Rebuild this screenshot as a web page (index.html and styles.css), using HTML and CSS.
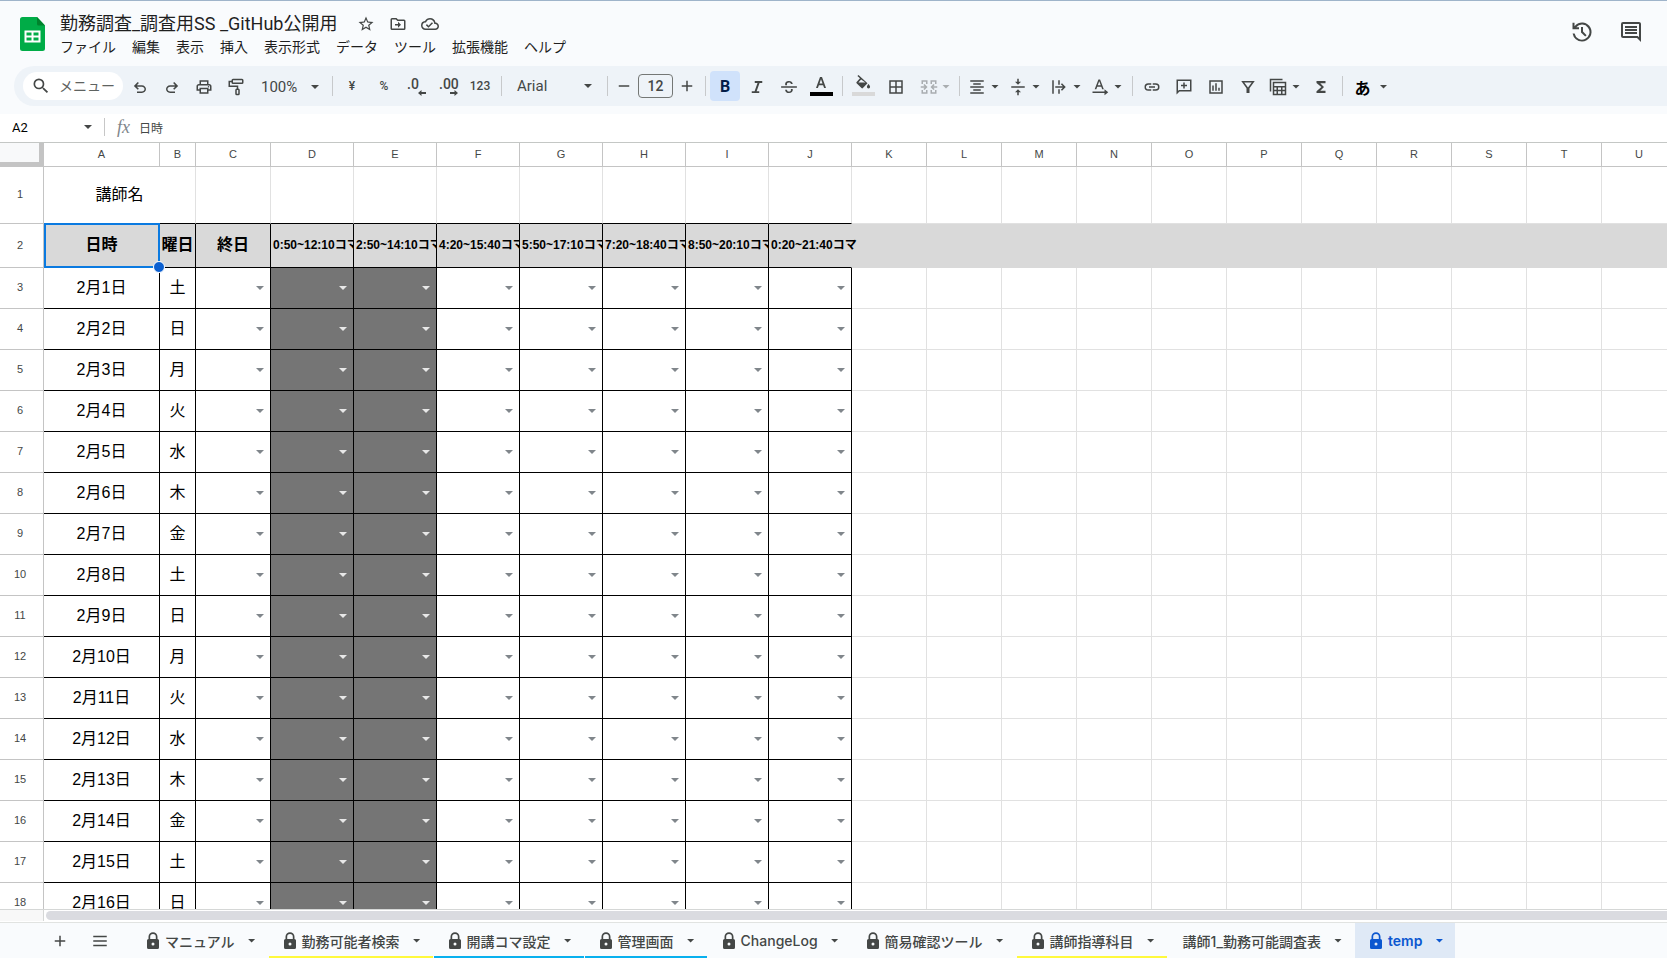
FILE: index.html
```html
<!DOCTYPE html>
<html lang="ja">
<head>
<meta charset="utf-8">
<meta name="viewport" content="width=device-width, initial-scale=1">
<title>勤務調査_調査用SS _GitHub公開用</title>
<link rel="stylesheet" href="styles.css">
</head>
<body>
<header class="app-header">
  <a class="logo" href="#" aria-label="スプレッドシート ホーム">
    <svg width="25" height="34" viewBox="0 0 25 34"><path fill="#00ac47" d="M2.500 0H17l8 8.500V31.500a2.500 2.500 0 0 1-2.500 2.500h-20A2.500 2.500 0 0 1 0 31.500v-29A2.500 2.500 0 0 1 2.500 0z"/><path fill="#00832d" d="M17 0l8 8.500h-6.500A1.500 1.500 0 0 1 17 7z"/><path fill="#fff" fill-rule="evenodd" d="M4.500 13.500h16v12h-16zM6.500 15.500v3h5v-3zm7 0v3h5v-3zm-7 5v3h5v-3zm7 0v3h5v-3z"/></svg>
  </a>
  <div class="heading">
    <div class="title-row">
      <h1 class="doc-title">勤務調査_調査用SS _GitHub公開用</h1>
      <div class="title-actions">
        <button class="plain" aria-label="スターを付ける"><svg class="ic" viewBox="0 0 24 24"><path d="M22 9.240l-7.190-.620L12 2 9.190 8.630 2 9.240l5.460 4.730L5.820 21 12 17.270 18.180 21l-1.630-7.030L22 9.240zM12 15.400l-3.760 2.270 1-4.280-3.320-2.880 4.380-.380L12 6.100l1.710 4.040 4.380.380-3.320 2.880 1 4.280L12 15.400z"/></svg></button>
        <button class="plain" aria-label="移動"><svg class="ic" viewBox="0 0 24 24"><path d="M20 6h-8l-2-2H4a2 2 0 0 0-2 2v12a2 2 0 0 0 2 2h16a2 2 0 0 0 2-2V8a2 2 0 0 0-2-2zm0 12H4V6h5.170l2 2H20v10zm-8-1l4-4-4-4v3H8v2h4z"/></svg></button>
        <button class="plain" aria-label="保存状況"><svg class="ic" viewBox="0 0 24 24"><path d="M19.350 10.040A7.490 7.490 0 0 0 12 4C9.110 4 6.600 5.640 5.350 8.040A5.994 5.994 0 0 0 0 14c0 3.310 2.690 6 6 6h13c2.760 0 5-2.240 5-5 0-2.640-2.050-4.780-4.650-4.960zM19 18H6c-2.210 0-4-1.790-4-4 0-2.050 1.530-3.760 3.560-3.970l1.070-.110.500-.950A5.469 5.469 0 0 1 12 6c2.620 0 4.880 1.860 5.390 4.430l.300 1.500 1.530.110A2.980 2.980 0 0 1 22 15c0 1.650-1.350 3-3 3zm-9-3.820l-2.090-2.090L6.500 13.500 10 17l6.010-6.010-1.410-1.410z"/></svg></button>
      </div>
    </div>
    <nav class="menus" aria-label="メニュー">
      <button class="plain">ファイル</button><button class="plain">編集</button><button class="plain">表示</button><button class="plain">挿入</button><button class="plain">表示形式</button><button class="plain">データ</button><button class="plain">ツール</button><button class="plain">拡張機能</button><button class="plain">ヘルプ</button>
    </nav>
  </div>
  <div class="header-actions">
    <button class="plain" aria-label="変更履歴"><svg class="ic-lg" viewBox="0 0 24 24"><path d="M12 21.500A9.500 9.500 0 0 1 2.600 13.500h2a7.500 7.500 0 1 0 1.700-6.300H9v2H2.500V2.700h2v3.500A9.500 9.500 0 1 1 12 21.500zM11 7h2v4.600l3.600 3.600-1.400 1.400L11 12.400z"/></svg></button>
    <button class="plain" aria-label="コメント"><svg class="ic-lg" viewBox="0 0 24 24"><path d="M22 4c0-1.100-.9-2-2-2H4a2 2 0 0 0-2 2v12c0 1.100.9 2 2 2h14l4 4V4zm-2 13.170L18.830 16H4V4h16v13.170zM6 12h12v2H6zm0-3h12v2H6zm0-3h12v2H6z"/></svg></button>
  </div>
</header>

<div class="toolbar" role="toolbar" aria-label="ツールバー">
  <label class="search">
    <svg class="ic-search" viewBox="0 0 24 24"><path d="M15.500 14h-.790l-.280-.270A6.471 6.471 0 0 0 16 9.500 6.500 6.500 0 1 0 9.500 16c1.610 0 3.090-.590 4.230-1.570l.270.280v.790l5 4.990L20.490 19l-4.990-5zm-6 0C7.010 14 5 11.990 5 9.500S7.010 5 9.500 5 14 7.010 14 9.500 11.990 14 9.500 14z"/></svg>
    <input type="text" placeholder="メニュー" aria-label="メニューを検索">
  </label>
  <button class="tool" aria-label="元に戻す"><svg class="ic" viewBox="0 0 24 24"><path d="M8 20v-2h6.500c2 0 3.500-1.300 3.500-3.200S16.500 11.500 14.500 11.500H7.800l2.700 2.700L9 15.700l-5.200-5.200L9 5.300l1.500 1.500-2.700 2.700h6.700c3.100 0 5.500 2.300 5.500 5.300S17.600 20 14.500 20z"/></svg></button>
  <button class="tool" aria-label="やり直し"><svg class="ic" viewBox="0 0 24 24"><path d="M16 20v-2H9.500C7.500 18 6 16.700 6 14.800s1.500-3.300 3.500-3.300h6.700l-2.700 2.700 1.500 1.500 5.200-5.200L15 5.300l-1.500 1.500 2.700 2.700H9.500C6.400 9.500 4 11.800 4 14.800S6.400 20 9.500 20z"/></svg></button>
  <button class="tool" aria-label="印刷"><svg class="ic" viewBox="0 0 24 24"><path d="M19 8h-1V3H6v5H5c-1.660 0-3 1.340-3 3v6h4v4h12v-4h4v-6c0-1.660-1.340-3-3-3zM8 5h8v3H8V5zm8 12v2H8v-4h8v2zm2-2v-2H6v2H4v-4c0-.550.450-1 1-1h14c.550 0 1 .450 1 1v4h-2z"/><circle cx="18" cy="11.500" r="1"/></svg></button>
  <button class="tool" aria-label="書式を貼り付け"><svg class="ic outline" viewBox="0 0 24 24"><rect x="7" y="2" width="14" height="5" rx="1"/><path d="M7 4.500H3V11h11v4"/><rect x="12" y="15" width="4" height="7" rx="1"/></svg></button>
  <button class="tool zoom"><span>100%</span><i class="caret"></i></button>
  <span class="sep"></span>
  <button class="tool small" aria-label="通貨の表示形式">¥</button>
  <button class="tool small" aria-label="パーセント">%</button>
  <button class="tool decimals" aria-label="小数点以下の桁数を減らす"><span>.0</span><svg width="8" height="6" viewBox="0 0 8 6"><path d="M3.500 0v2H8v2H3.500v2L0 3z"/></svg></button>
  <button class="tool decimals" aria-label="小数点以下の桁数を増やす"><span>.00</span><svg width="8" height="6" viewBox="0 0 8 6"><path d="M4.500 0v2H0v2h4.500v2L8 3z"/></svg></button>
  <button class="tool small" aria-label="表示形式の詳細">123</button>
  <span class="sep"></span>
  <button class="tool font"><span>Arial</span><i class="caret"></i></button>
  <span class="sep"></span>
  <button class="tool step" aria-label="縮小"><svg class="ic" viewBox="0 0 24 24"><path d="M5 11h14v2H5z"/></svg></button>
  <input class="size" type="text" value="12" aria-label="フォントサイズ">
  <button class="tool step" aria-label="拡大"><svg class="ic" viewBox="0 0 24 24"><path d="M5 11h6V5h2v6h6v2h-6v6h-2v-6H5z"/></svg></button>
  <span class="sep"></span>
  <button class="tool on" aria-label="太字" aria-pressed="true"><b>B</b></button>
  <button class="tool" aria-label="斜体"><svg class="ic" viewBox="0 0 24 24"><path d="M9 4v2.500h3.700L8.800 17.500H5V20h10v-2.500h-3.500l3.900-11H19V4z"/></svg></button>
  <button class="tool" aria-label="取り消し線"><svg class="ic" viewBox="0 0 24 24"><path d="M1.500 11h21v2h-21zM7 9.500C6.300 5.800 8.800 4 12 4c2.700 0 4.700 1.300 5 4h-2.500c-.2-1.300-1-2-2.500-2-1.900 0-3.200 1-2.600 3.500zM17 14.500c.5 3.500-1.800 5.500-5 5.500-2.900 0-5-1.500-5.200-4.500h2.500c.2 1.700 1.100 2.500 2.700 2.500 2 0 3-1.200 2.500-3.500z"/></svg></button>
  <button class="tool ink" aria-label="テキストの色"><svg width="18" height="14" viewBox="0 0 18 14"><path fill-rule="evenodd" d="M8 1h2l4 11h-1.900l-1-2.800H6.900L5.900 12H4zM7.500 7.600h3L9 3.200z"/></svg><i class="bar"></i></button>
  <span class="sep"></span>
  <button class="tool ink fill" aria-label="塗りつぶしの色"><svg width="18" height="16" viewBox="0 0 18 16"><path fill-rule="evenodd" d="M4.500 0l9 8.300-4.600 4.800c-.4.400-1 .4-1.400 0L2.600 8.300c-.4-.4-.4-1 0-1.400L6 3.300 3.400 1zM7.100 4.500L4.400 7.500h7zM14.500 9s1.600 1.700 1.600 2.800a1.600 1.600 0 0 1-3.200 0C12.900 10.700 14.500 9 14.500 9z"/></svg><i class="bar pale"></i></button>
  <button class="tool" aria-label="枠線"><svg class="ic" viewBox="0 0 24 24"><path d="M3 3v18h18V3zm8 16H5v-6h6zm0-8H5V5h6zm8 8h-6v-6h6zm0-8h-6V5h6z"/></svg></button>
  <button class="tool merge" aria-label="セルを結合" disabled><svg class="ic" viewBox="0 0 24 24"><path d="M2 3h8v5H8V5H4v3H2zm12 0h8v5h-2V5h-4v3h-2zM2 16h2v3h4v-3h2v5H2zm12 0h2v3h4v-3h2v5h-8zM1 11h5.200L4.500 9.300 6 8l4 4-4 4-1.500-1.300L6.200 13H1zm22 0h-5.200l1.700-1.700L18 8l-4 4 4 4 1.500-1.300-1.700-1.700H23z"/></svg><i class="caret"></i></button>
  <span class="sep"></span>
  <button class="tool pair" aria-label="水平方向の配置"><svg class="ic" viewBox="0 0 24 24"><path d="M3 3h18v2H3zm4 4h10v2H7zm-4 4h18v2H3zm4 4h10v2H7zm-4 4h18v2H3z"/></svg><i class="caret"></i></button>
  <button class="tool pair" aria-label="垂直方向の配置"><svg class="ic" viewBox="0 0 24 24"><path d="M3 11h18v2H3zM11 1h2v4h3l-4 4-4-4h3zm1 14l4 4h-3v4h-2v-4H8z"/></svg><i class="caret"></i></button>
  <button class="tool pair" aria-label="テキストを折り返す"><svg class="ic" viewBox="0 0 24 24"><path d="M3 3h2v18H3zM11 3h2v6h-2zm0 12h2v6h-2zM7 11h10.200l-2.700-2.600L16 7l5 5-5 5-1.500-1.400 2.700-2.600H7z"/></svg><i class="caret"></i></button>
  <button class="tool pair" aria-label="テキストの回転"><svg class="ic" viewBox="0 0 24 24"><path fill-rule="evenodd" d="M9.900 2h2.200l5 13h-2.200l-1.200-3.300H8.300L7.100 15H4.900zM9 9.800h4l-2-5.600zM2 18h16v-3l5 4-5 4v-3H2z"/></svg><i class="caret"></i></button>
  <span class="sep"></span>
  <button class="tool" aria-label="リンクを挿入"><svg class="ic" viewBox="0 0 24 24"><path d="M3.900 12c0-1.710 1.390-3.100 3.100-3.100h4V7H7a5 5 0 0 0 0 10h4v-1.900H7c-1.710 0-3.100-1.390-3.100-3.100zM8 13h8v-2H8v2zm9-6h-4v1.900h4a3.100 3.100 0 0 1 0 6.200h-4V17h4a5 5 0 0 0 0-10z"/></svg></button>
  <button class="tool" aria-label="コメントを挿入"><svg class="ic" viewBox="0 0 24 24"><path d="M2 2h20v16H6l-4 4zm2 2v13.200L5.200 16H20V4zm7 2h2v3h3v2h-3v3h-2v-3H8V9h3z"/></svg></button>
  <button class="tool" aria-label="グラフを挿入"><svg class="ic" viewBox="0 0 24 24"><path d="M3 3h18v18H3zm2 2v14h14V5zm2 5h2v7H7zm4-3h2v10h-2zm4 6h2v4h-2z"/></svg></button>
  <button class="tool" aria-label="フィルタを作成"><svg class="ic" viewBox="0 0 24 24"><path d="M3 4h18l-7 9.500V20h-4v-6.500zm4 2l5 6.800L17 6z"/></svg></button>
  <button class="tool pair" aria-label="テーブル"><svg class="ic" viewBox="0 0 24 24"><path fill-rule="evenodd" d="M1 1h17v2H3v15H1zM5 5h18v18H5zm2 2v3.500h14V7zm0 5.500v3h3v-3zm5 0v3h4v-3zm6 0v3h3v-3zm-11 5V21h3v-3.500zm5 0V21h4v-3.500zm6 0V21h3v-3.500z"/></svg><i class="caret"></i></button>
  <button class="tool" aria-label="関数"><svg class="ic" viewBox="0 0 24 24"><path d="M18 4H6v2.500l6.500 5.500L6 17.500V20h12v-3h-7l5-5-5-5h7z"/></svg></button>
  <span class="sep"></span>
  <button class="tool ime" aria-label="入力ツール"><b>あ</b><i class="caret"></i></button>
</div>

<div class="formula">
  <div class="namebox"><input type="text" value="A2" aria-label="名前ボックス"><i class="caret"></i></div>
  <span class="divider"></span>
  <label class="fx" for="fx-input">fx</label>
  <input class="fx-input" id="fx-input" type="text" value="日時">
</div>

<main class="sheet">
  <table class="grid">
    <colgroup id="cols"></colgroup>
    <thead><tr id="letters"></tr></thead>
    <tbody id="rows"></tbody>
  </table>
</main>

<div class="scroll"><div class="scroll-corner"></div><div class="scroll-track"><div class="thumb"></div></div></div>

<footer class="tabs">
  <button class="plain foot" aria-label="シートを追加"><svg class="ic" viewBox="0 0 24 24"><path d="M5 11h6V5h2v6h6v2h-6v6h-2v-6H5z"/></svg></button>
  <button class="plain foot" aria-label="すべてのシート"><svg class="ic" viewBox="0 0 24 24"><path d="M3 5h18v2H3zm0 6h18v2H3zm0 6h18v2H3z"/></svg></button>
  <nav class="tab-list" id="tabs" aria-label="シート"></nav>
</footer>
<script src="script.js"></script>
</body>
</html>
```

FILE: styles.css
```css
* { box-sizing: border-box; }

body {
  margin: 0;
  height: 100vh;
  display: flex;
  flex-direction: column;
  overflow: hidden;
  background: #f9fbfd;
  border-top: 1px solid #9fb4ca;
  color: #1f1f1f;
  font-family: Roboto, "Noto Sans CJK JP", sans-serif;
  font-size: 14px;
}

button, input, select { font: inherit; color: inherit; margin: 0; }
svg { display: block; fill: #444746; flex: none; }
.ic { width: 18px; height: 18px; }
.ic-lg { width: 24px; height: 24px; }
.outline { fill: none; stroke: #444746; stroke-width: 2; }
.plain { padding: 0; border: 0; background: none; white-space: nowrap; }

.caret {
  flex: none;
  width: 8px;
  height: 4px;
  background: #444746;
  clip-path: polygon(0 0, 100% 0, 50% 100%);
}

/* header */
.app-header { display: flex; flex: none; height: 65px; padding: 0 24px 0 20px; }
.logo { padding-top: 16px; margin-right: 15px; }
.heading { flex: 1; padding-top: 11px; }
.title-row { display: flex; align-items: center; height: 24px; gap: 20px; }
.doc-title { margin: 0; font-size: 18px; line-height: 24px; font-weight: 400; white-space: nowrap; }
.title-actions { display: flex; gap: 14px; }
.menus { display: flex; gap: 16px; line-height: 22px; }
.header-actions { display: flex; align-items: center; gap: 25px; height: 61px; }

/* toolbar */
.toolbar {
  display: flex;
  flex: none;
  align-items: center;
  gap: 2px;
  height: 40px;
  margin-left: 14px;
  padding-left: 9px;
  border-radius: 20px 0 0 20px;
  background: #eef3f8;
  color: #444746;
}
.search {
  display: flex;
  align-items: center;
  flex: none;
  width: 100px;
  height: 28px;
  padding-left: 8px;
  gap: 8px;
  border-radius: 14px;
  background: #fff;
}
.ic-search { width: 20px; height: 20px; }
.search input { width: 60px; padding: 0; border: 0; background: none; outline: 0; }
.search input::placeholder { color: #5f6361; opacity: 1; }
.tool {
  display: flex;
  flex: none;
  align-items: center;
  justify-content: center;
  width: 30px;
  height: 30px;
  padding: 1px 0 0;
  border: 0;
  border-radius: 4px;
  background: none;
  font-weight: 500;
}
.sep { flex: none; width: 1px; height: 20px; margin: 0 2px 0 4px; background: #c7c9cb; }
.zoom { width: 73px; padding: 2px 7px 0 8px; justify-content: space-between; font-weight: 400; font-size: 15px; }
.small { padding: 0; font-size: 12px; }
.decimals { flex-direction: column; align-items: flex-start; padding-left: 6px; font-size: 14px; line-height: 12px; }
.decimals svg { align-self: flex-end; margin-right: 5px; }
.font { width: 95px; padding: 0 9px 0 11px; justify-content: space-between; font-weight: 400; font-size: 15px; }
.step { width: 24px; padding: 0; }
.size {
  flex: none;
  width: 35px;
  height: 24px;
  padding: 0;
  border: 1px solid #747775;
  border-radius: 4px;
  background: none;
  text-align: center;
  font-weight: 500;
}
.on { background: #d0e2fb; color: #041e49; font-size: 16px; }
.ink { flex-direction: column; justify-content: flex-start; padding-top: 5px; }
.bar { width: 23px; height: 4px; margin-top: 2px; background: #000; }
.fill { width: 32px; padding-top: 4px; }
.fill .bar { margin-top: 1px; background: #d9d9d9; }
.merge { width: 40px; padding-left: 4px; gap: 4px; opacity: .4; }
.pair { width: 39px; gap: 5px; }
.ime { width: 48px; gap: 9px; color: #000; font-size: 16px; }

/* formula bar */
.formula {
  display: flex;
  flex: none;
  align-items: center;
  height: 29px;
  margin-top: 8px;
  padding: 0 8px 2px 12px;
  background: #fff;
  border-bottom: 1px solid #c4c7c5;
}
.namebox { display: flex; align-items: center; width: 80px; }
.namebox input { flex: 1; width: 60px; padding: 0; border: 0; background: none; font-size: 13px; color: #000; }
.divider { width: 1px; height: 18px; margin: 0 12px; background: #c7c7c7; }
.fx { width: 22px; font: italic 18px/20px "Liberation Serif", serif; color: #80868b; }
.fx-input { flex: 1; padding: 0; border: 0; background: none; font-size: 12px; color: #444746; }

/* grid */
.sheet {
  flex: 1;
  min-height: 0;
  overflow: hidden;
  background: #fff;
  border-bottom: 1px solid #d5d7d6;
  font-family: "Liberation Sans", "Noto Sans CJK JP", sans-serif;
}
.grid { table-layout: fixed; width: 1677px; border-collapse: separate; border-spacing: 0; color: #000; }
.col-head { width: 44px; }
.col-a { width: 116px; }
.col-b { width: 36px; }
.col-c { width: 75px; }
.col-slot { width: 83px; }
.grid th, .grid td {
  height: 41px;
  padding: 0;
  border: 0 solid #e1e1e1;
  border-width: 0 1px 1px 0;
  text-align: center;
  vertical-align: middle;
  font-size: 16px;
  line-height: 20px;
  white-space: nowrap;
}
.grid thead th { height: 24px; padding-bottom: 2px; border-color: #c4c4c4; font-size: 11px; font-weight: 400; color: #444746; }
.grid .corner { background: #f8f9fa; border-color: #c4c4c4; border-width: 0 5px 5px 0; padding: 0; }
.grid tbody th { border-color: #c4c4c4; padding: 0 3px 2px 0; font-size: 11px; font-weight: 400; color: #444746; }
.row-name th, .grid .row-name td { height: 57px; }
.row-title th, .grid .row-title td { height: 44px; }
.grid .row-title td { padding-bottom: 2px; background: #d9d9d9; border-color: #d9d9d9; font-weight: 700; }
.grid .row-name .under { border-bottom-color: #000; }
.grid td.boxed, .grid .row-title td.boxed { border-color: #000; }
.grid .row-title td.last { border-right-color: #d9d9d9; }
.grid td.closed { background: #757575; }
.slot-name { padding-left: 2px; overflow: hidden; text-align: left; font-size: 12px; }
.last .slot-name { overflow: visible; position: relative; }
.active { position: relative; }
.active::before {
  content: "";
  position: absolute;
  inset: -1px -1px -1px 0;
  border: 2px solid #0b7ae0;
}
.active::after {
  content: "";
  position: absolute;
  right: -6px;
  bottom: -6px;
  width: 10px;
  height: 10px;
  border: 1px solid #fff;
  border-radius: 50%;
  background: #0b5fd0;
  z-index: 1;
}
.pick { display: flex; align-items: center; padding-right: 6px; }
.pick select { flex: 1; min-width: 0; height: 24px; border: 0; background: none; appearance: none; }
.pick .caret { background: #80868b; }
.closed .caret { background: #e8e8e8; }

/* horizontal scrollbar */
.scroll { display: flex; flex: none; height: 13px; background: #fff; border-bottom: 1px solid #e1e3e1; }
.scroll-corner { width: 44px; height: 11px; background: #f8f8f8; border-right: 1px solid #d5d7d6; }
.scroll-track { flex: 1; padding: 1px 0 0 2px; }
.thumb { height: 9px; border-radius: 5px 0 0 5px; background: #dadbe0; }

/* sheet tabs */
.tabs { display: flex; flex: none; height: 35px; padding-left: 40px; font-family: Inter, "Noto Sans CJK JP", sans-serif; }
.foot { display: flex; align-items: center; justify-content: center; width: 40px; }
.tab-list { display: flex; gap: 1px; margin-left: 12px; }
.tab {
  display: flex;
  align-items: center;
  padding: 2px 12px 0 15px;
  border: 0;
  border-bottom: 2px solid transparent;
  background: none;
  color: #444746;
  font-weight: 500;
  white-space: nowrap;
}
.tab svg { margin-right: 6px; }
.tab .caret { margin-left: 13px; }
.tab.yellow { border-bottom-color: #fff93d; }
.tab.cyan { border-bottom-color: #08b0ee; }
.tab.current { background: #dfe9f6; color: #0b57d0; font-weight: 600; }
.tab.current svg { fill: #0b57d0; }
.tab.current .caret { background: #0b57d0; }
```

FILE: script.js
```js
const letters = 'ABCDEFGHIJKLMNOPQRSTU'.split('');
const colClass = i => i === 0 ? 'col-a' : i === 1 ? 'col-b' : i > 2 && i < 10 ? 'col-slot' : 'col-c';

document.getElementById('cols').innerHTML =
  '<col class="col-head">' + letters.map((_, i) => `<col class="${colClass(i)}">`).join('');
document.getElementById('letters').innerHTML =
  '<th class="corner"></th>' + letters.map(l => `<th scope="col">${l}</th>`).join('');

const blanks = '<td></td>'.repeat(11);
const slots = ['0:50~12:10コマ', '2:50~14:10コマ', '4:20~15:40コマ', '5:50~17:10コマ',
  '7:20~18:40コマ', '8:50~20:10コマ', '0:20~21:40コマ'];

let html = '<tr class="row-name"><th scope="row">1</th><td class="under" colspan="2">講師名</td>' +
  '<td class="under"></td>'.repeat(8) + blanks + '</tr>';

html += '<tr class="row-title"><th scope="row">2</th><td class="boxed active">日時</td>' +
  '<td class="boxed">曜日</td><td class="boxed">終日</td>' +
  slots.map((s, i) => `<td class="boxed${i === 6 ? ' last' : ''}"><div class="slot-name">${s}</div></td>`).join('') +
  blanks + '</tr>';

const weekdays = '土日月火水木金';
for (let day = 1; day <= 16; day++) {
  html += `<tr><th scope="row">${day + 2}</th><td class="boxed">2月${day}日</td><td class="boxed">${weekdays[(day - 1) % 7]}</td>`;
  for (let c = 2; c < 10; c++) {
    const closed = c === 3 || c === 4 ? ' closed' : '';
    html += `<td class="boxed${closed}"><div class="pick"><select aria-label="${letters[c]}${day + 2}"><option></option></select><i class="caret"></i></div></td>`;
  }
  html += blanks + '</tr>';
}
document.getElementById('rows').innerHTML = html;

const lock = '<svg width="12" height="18" viewBox="0 0 12 18"><path fill-rule="evenodd" d="M1.500 7V4.800a4.500 4.500 0 0 1 9 0V7A1.500 1.500 0 0 1 12 8.500v7a1.500 1.500 0 0 1-1.500 1.500h-9A1.500 1.500 0 0 1 0 15.500v-7A1.500 1.500 0 0 1 1.500 7zM3.200 7h5.600V4.800a2.800 2.800 0 0 0-5.600 0zM6 10.500a1.500 1.500 0 1 0 0 3 1.500 1.500 0 0 0 0-3z"/></svg>';
const sheets = [
  ['マニュアル', ''], ['勤務可能者検索', 'yellow'], ['開講コマ設定', 'cyan'], ['管理画面', 'cyan'],
  ['ChangeLog', ''], ['簡易確認ツール', ''], ['講師指導科目', 'yellow'],
  ['講師1_勤務可能調査表', '', true], ['temp', 'current']
];
document.getElementById('tabs').innerHTML = sheets.map(([name, cls, open]) =>
  `<button class="tab ${cls}">${open ? '' : lock}<span>${name}</span><i class="caret"></i></button>`).join('');
```
